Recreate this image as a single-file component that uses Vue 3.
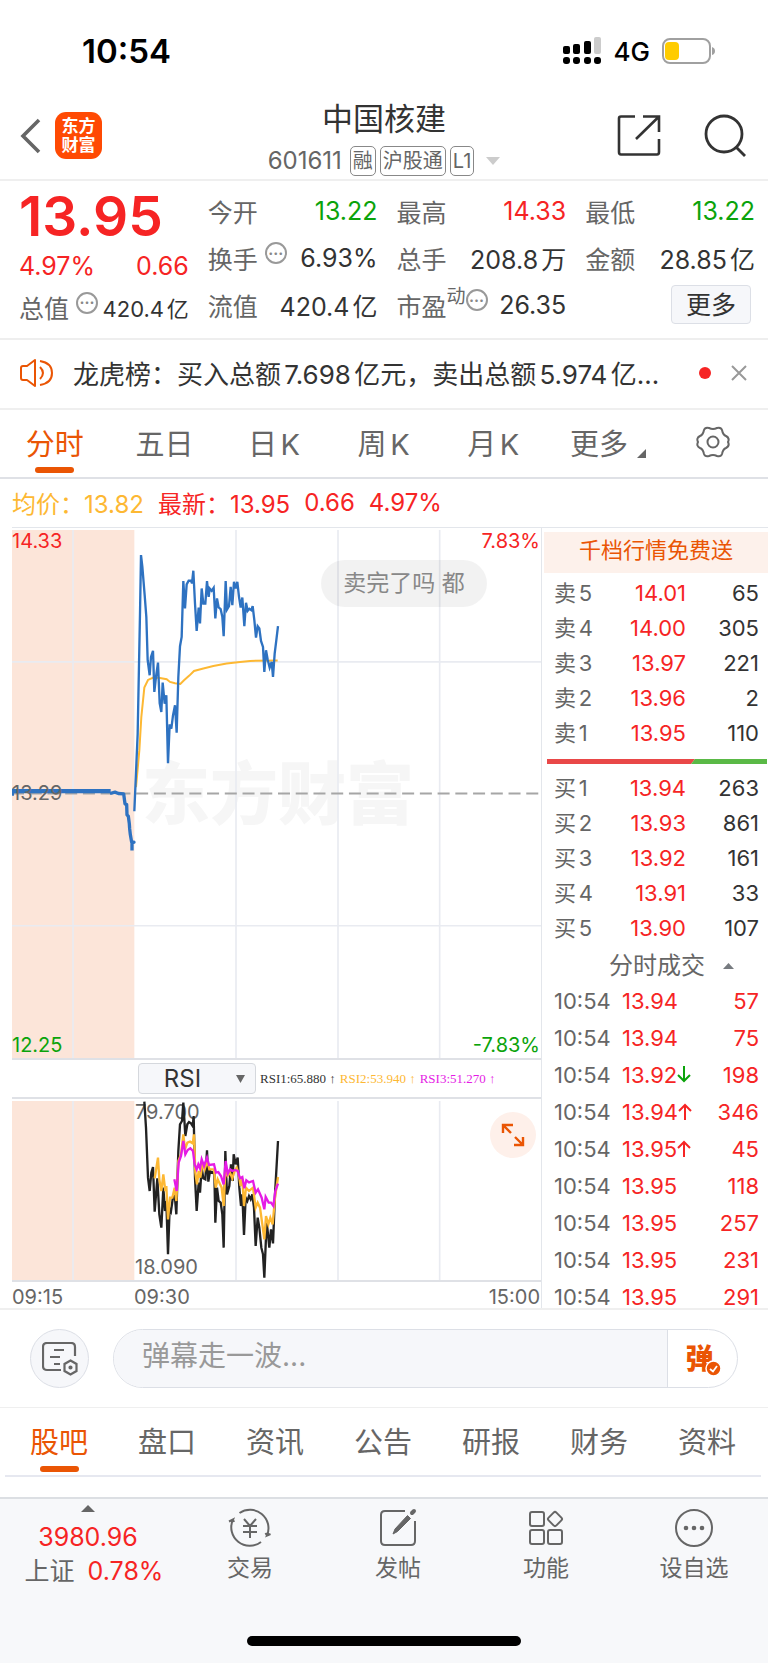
<script setup>
import { ref } from 'vue'

const period = ref('分时')
const periods = ['分时', '五日', '日K', '周K', '月K']
const section = ref('股吧')
const sections = ['股吧', '盘口', '资讯', '公告', '研报', '财务', '资料']
const indicator = ref('RSI')
const message = ref('')

const sells = [
  ['卖5', '14.01', 65], ['卖4', '14.00', 305], ['卖3', '13.97', 221], ['卖2', '13.96', 2], ['卖1', '13.95', 110],
]
const buys = [
  ['买1', '13.94', 263], ['买2', '13.93', 861], ['买3', '13.92', 161], ['买4', '13.91', 33], ['买5', '13.90', 107],
]
const trades = [
  ['13.94', '', 57], ['13.94', '', 75], ['13.92', 'down', 198], ['13.94', 'up', 346], ['13.95', 'up', 45],
  ['13.95', '', 118], ['13.95', '', 257], ['13.95', '', 231], ['13.95', '', 291],
]

const priceLine = '403,872 413,640 420,280 423,105 427,140 434,225 439,290 443,420 449,465 453,410 459,392 463,515 468,470 474,427 479,548 484,575 488,487 494,550 499,525 504,728 509,612 514,625 519,585 525,555 530,637 535,470 540,378 545,350 550,183 555,265 560,193 566,182 573,182 576,190 580,152 585,250 590,332 596,262 600,310 605,205 610,250 616,250 621,183 626,230 629,205 635,212 641,203 646,295 651,235 656,262 662,267 667,290 671,348 677,183 681,268 687,258 692,200 697,255 702,185 707,205 712,185 717,230 722,262 727,232 733,318 738,248 743,272 748,266 754,270 758,258 763,300 768,352 773,318 778,325 783,362 789,380 793,455 798,390 803,418 809,442 815,425 819,470 824,400 829,360 834,318'
const averageLine = '408,800 418,690 424,590 433,502 444,479 460,472 480,473 500,477 510,485 525,489 541,491 552,480 568,466 582,452 610,445 640,437 680,430 720,425 750,422 833,421'
const openingLine = '330,819 345,815 355,819 371,820 375,850 380,852 381,883 385,887 388,910 389,925 391,942 395,965 402,965 396,967 396,990'
const rsi1 = '73,32 78,110 84,260 89,300 94,245 99,228 104,362 112,262 118,370 124,410 130,290 135,360 139,330 144,490 149,350 153,360 158,325 164,310 169,370 175,180 180,100 186,90 190,35 196,135 202,100 207,93 213,97 218,105 221,75 225,260 230,360 236,275 240,305 245,230 250,262 256,265 261,178 265,272 270,240 277,245 283,240 286,395 291,290 296,330 302,335 307,370 311,470 316,180 321,310 328,285 333,220 338,270 341,190 347,220 353,200 358,290 363,345 367,310 372,432 377,320 382,330 387,315 392,325 397,310 402,350 407,465 413,380 418,410 424,470 429,490 433,560 440,390 448,470 453,415 459,457 465,310 474,150'
const rsi2 = '104,262 110,225 114,200 118,265 124,300 130,250 136,300 139,285 144,385 150,320 157,320 164,290 169,330 175,210 183,190 190,130 195,175 202,155 210,152 218,157 222,130 226,245 231,280 236,240 241,260 248,215 254,235 262,210 268,235 282,235 287,290 293,265 300,280 305,290 311,345 316,240 323,255 330,245 337,262 344,240 350,230 356,250 362,285 367,265 372,345 378,290 387,300 399,290 407,350 413,335 420,350 427,400 433,445 438,375 445,400 451,380 458,400 465,320 474,258'
const rsi3 = '163,265 170,300 176,215 183,195 190,150 196,190 203,177 211,172 219,180 224,220 230,235 235,220 240,232 245,205 252,225 261,200 267,222 282,220 288,245 295,243 303,255 311,280 317,210 323,248 330,235 337,240 345,237 353,240 360,262 367,258 373,292 379,268 387,274 399,270 407,305 414,295 425,320 433,355 437,318 446,335 453,335 460,345 466,300 474,278'
</script>

<template>
  <div class="page">
    <div class="status">
      <span class="clock">10:54</span>
      <div class="status-right">
        <svg class="signal" width="40" height="28" viewBox="0 0 40 28">
          <g>
            <rect x="1" y="9" width="7" height="8" rx="2" /><rect x="11" y="7" width="7" height="10" rx="2" />
            <rect x="22" y="4" width="7" height="13" rx="2" /><rect x="32" y="0" width="7" height="17" rx="2" fill="#ccc" />
            <rect x="1" y="20" width="7" height="7" rx="3" /><rect x="11" y="20" width="7" height="7" rx="3" />
            <rect x="22" y="20" width="7" height="7" rx="3" /><rect x="32" y="20" width="7" height="7" rx="3" />
          </g>
        </svg>
        <span class="network">4G</span>
        <svg width="54" height="26" viewBox="0 0 54 26">
          <rect x="1" y="1" width="47" height="24" rx="7" fill="none" stroke="#a0a0a0" stroke-width="2" />
          <rect x="3" y="4" width="14" height="18" rx="4" fill="#ffcc00" />
          <path d="M50 9 Q53 10 53 13 Q53 16 50 17Z" fill="#a0a0a0" />
        </svg>
      </div>
    </div>

    <header class="header">
      <div class="side">
        <button class="plain" aria-label="返回">
          <svg width="22" height="36" viewBox="0 0 22 36"><path d="M19 2 L3 18 L19 34" fill="none" stroke="#666" stroke-width="3.6" /></svg>
        </button>
        <a href="#" class="logo"><span>东方</span><span>财富</span></a>
      </div>
      <div class="title">
        <h1>中国核建</h1>
        <button class="plain code">
          <span class="digits">601611</span><span class="tag">融</span><span class="tag">沪股通</span><span class="tag">L1</span>
          <svg width="14" height="8" viewBox="0 0 14 8"><path d="M0 0H14L7 8Z" fill="#ccc" /></svg>
        </button>
      </div>
      <div class="side right">
        <button class="plain" aria-label="分享">
          <svg width="44" height="44" viewBox="0 0 44 44" fill="none" stroke="#333" stroke-width="2.6">
            <path d="M18 2.500H4Q2 2.500 2 4.500V38Q2 40.500 4 40.500H40Q42 40.500 42 38V25" /><path d="M26 2.500H42V18M42 2.500L19 25" />
          </svg>
        </button>
        <button class="plain" aria-label="搜索">
          <svg width="44" height="44" viewBox="0 0 44 44" fill="none" stroke="#333" stroke-width="2.800">
            <circle cx="21" cy="20" r="18" /><path d="M33 33L42 42" />
          </svg>
        </button>
      </div>
    </header>

    <section class="quote">
      <div class="lead">
        <strong class="last">13.95</strong>
        <div class="pair red"><span>4.97%</span><span>0.66</span></div>
        <div class="pair"><span class="name">总值<i class="info">···</i></span><span class="small">420.4亿</span></div>
      </div>
      <div class="col">
        <div class="pair"><span class="name">今开</span><span class="green">13.22</span></div>
        <div class="pair"><span class="name">换手<i class="info">···</i></span><span>6.93%</span></div>
        <div class="pair"><span class="name">流值</span><span>420.4亿</span></div>
      </div>
      <div class="col">
        <div class="pair"><span class="name">最高</span><span class="red">14.33</span></div>
        <div class="pair"><span class="name">总手</span><span>208.8万</span></div>
        <div class="pair"><span class="name tight">市盈<sup>动</sup><i class="info">···</i></span><span>26.35</span></div>
      </div>
      <div class="col">
        <div class="pair"><span class="name">最低</span><span class="green">13.22</span></div>
        <div class="pair"><span class="name">金额</span><span>28.85亿</span></div>
        <div class="pair end"><button class="more">更多</button></div>
      </div>
    </section>

    <section class="notice">
      <svg width="34" height="28" viewBox="0 0 34 28" fill="none" stroke="#ea5504" stroke-width="2">
        <path d="M15 1L7 7H3Q1 7 1 9V19Q1 21 3 21H7L15 27Z" stroke-linejoin="round" /><path d="M20 8Q26 14 20 20M20 2Q32 4 32 14Q32 24 20 26" />
      </svg>
      <p>龙虎榜：买入总额7.698亿元，卖出总额5.974亿…</p>
      <span class="dot"></span>
      <button class="plain" aria-label="关闭">
        <svg width="16" height="16" viewBox="0 0 16 16"><path d="M1 1L15 15M15 1L1 15" stroke="#999" stroke-width="2" /></svg>
      </button>
    </section>

    <nav class="periods">
      <button v-for="p in periods" :key="p" class="tab" :class="{ on: p === period }" @click="period = p">{{ p }}</button>
      <button class="tab wide">更多<svg width="9" height="9" viewBox="0 0 9 9"><path d="M9 0V9H0Z" fill="#666" /></svg></button>
      <button class="tab" aria-label="设置">
        <svg width="34" height="32" viewBox="0 0 34 32" fill="none" stroke="#666" stroke-width="2">
          <path d="M13 2Q17 4 21 2Q25 1 26 4Q27 9 30 10Q34 12 32 16Q34 20 30 22Q27 23 26 28Q25 31 21 30Q17 28 13 30Q9 31 8 28Q7 23 4 22Q0 20 2 16Q0 12 4 10Q7 9 8 4Q9 1 13 2Z" />
          <circle cx="17" cy="16" r="5.500" />
        </svg>
      </button>
    </nav>

    <div class="summary"><span class="gold">均价：13.82</span><span class="red">最新：13.95</span><span class="red">0.66</span><span class="red">4.97%</span></div>

    <main class="market">
      <div class="charts">
        <div class="chart">
          <span class="watermark">东方财富</span>
          <svg class="plot" viewBox="36 30 1587 1581" preserveAspectRatio="none" fill="none">
            <rect x="36" y="30" width="367" height="1581" fill="#fce5d9" />
            <path d="M219 30V1611M708 30V1611M1014 30V1611M1319 30V1611M36 425H1623M36 1215H1623" stroke="#e9ebf1" stroke-width="5" />
            <path d="M36 819H1623" stroke="#a6a6a6" stroke-width="6" stroke-dasharray="36 17.200" />
            <polyline :points="averageLine" stroke="#fdb833" stroke-width="6" />
            <path d="M38 804V826" stroke="#2e72c1" stroke-width="8" />
            <path d="M40 812H332" stroke="#2e72c1" stroke-width="13" />
            <polyline :points="openingLine" stroke="#2e72c1" stroke-width="10" stroke-linejoin="round" />
            <polyline :points="priceLine" stroke="#2e72c1" stroke-width="7" />
          </svg>
          <span class="mark top red">14.33</span>
          <span class="mark top far red">7.83%</span>
          <span class="mark mid">13.29</span>
          <span class="mark bottom green">12.25</span>
          <span class="mark bottom far green">-7.83%</span>
          <span class="bullet">卖完了吗 都</span>
        </div>
        <div class="rsi-bar">
          <label class="picker">
            <select v-model="indicator" aria-label="指标"><option>RSI</option></select>
            <svg width="9" height="8" viewBox="0 0 9 8"><path d="M0 0H9L4.500 8Z" fill="#666" /></svg>
          </label>
          <span>RSI1:65.880 ↑</span><span class="gold">RSI2:53.940 ↑</span><span class="pink">RSI3:51.270 ↑</span>
        </div>
        <div class="chart sub">
          <span class="mark top start">79.700</span>
          <svg class="plot" viewBox="-324 30 1587 537" preserveAspectRatio="none" fill="none">
            <rect x="-324" y="30" width="367" height="537" fill="#fce5d9" />
            <path d="M-141 30V567M348 30V567M654 30V567M959 30V567" stroke="#e9ebf1" stroke-width="5" />
            <polyline :points="rsi1" stroke="#222" stroke-width="7" />
            <polyline :points="rsi2" stroke="#fdb833" stroke-width="7" />
            <polyline :points="rsi3" stroke="#e51be5" stroke-width="7" />
          </svg>
          <span class="mark bottom start">18.090</span>
          <button class="expand" aria-label="放大">
            <svg width="24" height="24" viewBox="0 0 24 24" fill="none" stroke="#ea5504" stroke-width="2.400"><path d="M2 10V2H12M2 2L10 10M22 14V22H13M22 22L14 14" /></svg>
          </button>
        </div>
        <div class="times"><span>09:15</span><span class="open">09:30</span><span class="close">15:00</span></div>
      </div>

      <aside class="book">
        <a href="#" class="banner">千档行情免费送</a>
        <table class="depth">
          <tbody><tr v-for="r in sells" :key="r[0]"><th scope="row">{{ r[0] }}</th><td class="red">{{ r[1] }}</td><td>{{ r[2] }}</td></tr></tbody>
        </table>
        <svg class="ratio" viewBox="0 0 220 5" preserveAspectRatio="none"><path d="M0 0H148L144 5H0Z" fill="#e94848" /><path d="M148 0H220V5H144Z" fill="#5ab946" /></svg>
        <table class="depth">
          <tbody><tr v-for="r in buys" :key="r[0]"><th scope="row">{{ r[0] }}</th><td class="red">{{ r[1] }}</td><td>{{ r[2] }}</td></tr></tbody>
        </table>
        <button class="plain trades-title">分时成交<svg width="11" height="6" viewBox="0 0 11 6"><path d="M0 6H11L5.500 0Z" fill="#777b80" /></svg></button>
        <table class="trades">
          <tbody>
            <tr v-for="(t, i) in trades" :key="i">
              <th scope="row">10:54</th>
              <td>{{ t[0] }}<svg v-if="t[1]" :class="t[1]" width="14" height="17" viewBox="0 0 14 17" fill="none" stroke-width="2"><path d="M7 17V2M1 8L7 2L13 8" /></svg></td>
              <td>{{ t[2] }}</td>
            </tr>
          </tbody>
        </table>
      </aside>
    </main>

    <form class="comment" @submit.prevent>
      <button type="button" class="round" aria-label="弹幕设置">
        <svg width="36" height="34" viewBox="0 0 36 34" fill="none" stroke="#666" stroke-width="2.200">
          <path d="M19 28H5Q1 28 1 24V5Q1 1 5 1H29Q33 1 33 5V14M12 8H22M8 15H18M12 22H18" />
          <path d="M28.500 18.500L34.500 22V29L28.500 32.500L22.500 29V22Z" /><circle cx="28.500" cy="25.500" r="1" />
        </svg>
      </button>
      <div class="field">
        <input v-model="message" type="text" aria-label="弹幕" placeholder="弹幕走一波..." />
        <button type="button" class="danmu">弹
          <svg width="17" height="17" viewBox="0 0 17 17"><circle cx="8.500" cy="8.500" r="7.500" fill="#ea5504" stroke="#fff" stroke-width="1.500" /><path d="M5 9L8 11.500L12 6" fill="none" stroke="#fff" stroke-width="1.800" /></svg>
        </button>
      </div>
    </form>

    <nav class="sections">
      <button v-for="s in sections" :key="s" class="tab" :class="{ on: s === section }" @click="section = s">{{ s }}</button>
    </nav>

    <footer class="dock">
      <a href="#" class="index">
        <svg width="14" height="7" viewBox="0 0 14 7"><path d="M0 7H14L7 0Z" fill="#666" /></svg>
        <span class="red">3980.96</span>
        <span class="change"><span>上证</span><span class="red">0.78%</span></span>
      </a>
      <a href="#" class="item">
        <svg width="44" height="40" viewBox="0 0 44 40" fill="none" stroke="#666" stroke-width="2">
          <path d="M11.500 5A18.500 18.500 0 0 1 39 27.500L42.500 26M39 27.500L37.500 25" /><path d="M33 34A18.500 18.500 0 0 1 5 11.500L1 13.500M5 11.500L6 14" />
          <path d="M16 11L22 18L28 11M15 18H29M15 24H29M22 18V30" />
        </svg><span>交易</span>
      </a>
      <a href="#" class="item">
        <svg width="38" height="40" viewBox="0 0 38 40" fill="none" stroke="#666" stroke-width="2">
          <path d="M26 3H6Q2 3 2 7V33Q2 37 6 37H32Q36 37 36 33V13" /><path d="M33 5L35 3" stroke-width="4" stroke-linecap="round" /><path d="M28.500 7.500L31.500 10.500L18.500 23.500L14 26L16 21Z" fill="#666" stroke-width="1" />
        </svg><span>发帖</span>
      </a>
      <a href="#" class="item">
        <svg width="36" height="40" viewBox="0 0 36 40" fill="none" stroke="#666" stroke-width="2">
          <rect x="2" y="4" width="14" height="14" rx="2" /><rect x="2" y="22" width="14" height="14" rx="2" /><rect x="20" y="22" width="14" height="14" rx="2" /><rect x="21.500" y="5.500" width="11" height="11" rx="2" transform="rotate(45 27 11)" />
        </svg><span>功能</span>
      </a>
      <a href="#" class="item">
        <svg width="40" height="40" viewBox="0 0 40 40" fill="none" stroke="#666" stroke-width="2">
          <circle cx="20" cy="20" r="18" /><g fill="#666" stroke="none"><circle cx="12" cy="20" r="2.300" /><circle cx="20" cy="20" r="2.300" /><circle cx="28" cy="20" r="2.300" /></g>
        </svg><span>设自选</span>
      </a>
      <span class="home"></span>
    </footer>
  </div>
</template>

<style>
body { background: #fff; }
</style>

<style scoped>
* { box-sizing: border-box; }
.page { font-family: Inter, "Noto Sans CJK SC", sans-serif; color: #333; background: #fff; font-size: 24px; text-autospace: normal; }
button, input, select { font: inherit; color: inherit; }
button { border: 0; background: none; padding: 0; }
a { color: inherit; text-decoration: none; }
svg { display: block; }
.plain { display: flex; align-items: center; }
.red { color: #f62424; }
.green { color: #0ba30b; }
.gold { color: #fdb833; }
.pink { color: #e51be5; }

.status { display: flex; justify-content: space-between; align-items: center; height: 96px; padding: 6px 52px 0 82px; color: #000; }
.clock { font-size: 33px; font-weight: 600; }
.status-right { display: flex; align-items: center; gap: 12px; }
.network { font-size: 26px; font-weight: 500; }

.header { display: flex; justify-content: space-between; height: 85px; border-bottom: 2px solid #efefef; }
.side { display: flex; align-items: center; gap: 13px; width: 168px; padding: 0 0 4px 20px; }
.right { justify-content: flex-end; gap: 42px; padding: 0 21px 4px 0; }
.logo { display: flex; flex-direction: column; align-items: center; justify-content: center; width: 47px; height: 47px; border-radius: 11px; background: #ff4a03; color: #fff; font-size: 17px; font-weight: 700; line-height: 19px; }
.title { display: flex; flex-direction: column; align-items: center; gap: 8px; }
h1 { margin: 4px 0 0; font-size: 31px; font-weight: 400; line-height: 38px; }
.code { gap: 4px; line-height: 28px; color: #666; }
.digits { margin-right: 4px; }
.tag { border: 1px solid #888; border-radius: 5px; padding: 0 2px; font-size: 20px; }
.code svg { margin-left: 8px; }

.quote { display: grid; grid-template-columns: repeat(4, 1fr); gap: 19px; height: 159px; padding: 6px 13px 0 19px; border-bottom: 2px solid #eee; }
.lead { display: flex; flex-direction: column; }
.last { height: 56px; font-size: 55px; font-weight: 600; line-height: 58px; color: #f62424; }
.lead .pair.red { height: 46px; }
.lead .pair { height: 36px; }
.pair { display: flex; align-items: center; justify-content: space-between; height: 47px; font-size: 25px; white-space: nowrap; }
.end { justify-content: flex-end; }
.small { font-size: 22px; }
.name { display: flex; align-items: center; gap: 7px; color: #666; }
.tight { gap: 0; }
.info { display: flex; align-items: center; justify-content: center; width: 22px; height: 22px; margin-bottom: 9px; border: 2px solid #999; border-radius: 50%; font-size: 15px; font-style: normal; font-weight: 700; line-height: 15px; color: #888; }
sup { font-size: 19px; line-height: 19px; margin-bottom: 17px; }
.more { width: 80px; height: 39px; margin-right: 4px; border: 1px solid #dcdfe6; border-radius: 4px; background: #f6f7fa; line-height: 36px; }

.notice { display: flex; align-items: center; height: 70px; padding: 0 21px 2px 20px; border-bottom: 2px solid #efefef; font-size: 26px; }
.notice p { flex: 1; margin: 0 0 0 19px; padding-bottom: 2px; white-space: nowrap; }
.dot { width: 12px; height: 12px; margin-right: 20px; border-radius: 50%; background: #f62424; }

.periods { display: grid; grid-template-columns: repeat(5, 1fr) 120px 90px; height: 69px; padding-right: 10px; border-bottom: 2px solid #dfe1e6; }
.tab { position: relative; display: flex; align-items: center; justify-content: center; padding-bottom: 3px; font-size: 29px; color: #666; white-space: nowrap; }
.wide { gap: 9px; }
.wide svg { margin-top: 22px; }
.on { color: #ea5504; }
.on::after { content: ""; position: absolute; bottom: 4px; width: 39px; height: 6px; border-radius: 3px; background: #ea5504; }

.summary { display: flex; align-items: center; gap: 14px; height: 48px; padding: 0 12px 2px; }

.market { display: grid; grid-template-columns: minmax(0, 1fr) 226px; border-bottom: 2px solid #efefef; }
.charts { margin-left: 12px; border-top: 1px solid #e3e6eb; border-right: 1px solid #e3e6eb; }
.chart { position: relative; height: 532px; padding-top: 2px; border-bottom: 2px solid #dfe1e6; }
.plot { width: 100%; height: 100%; position: relative; }
.watermark { position: absolute; left: 130px; top: 216px; font-size: 68px; font-weight: 900; line-height: 100px; color: #f6f6f6; }
.mark { position: absolute; left: 0; font-size: 20px; line-height: 24px; color: #666; }
.mark.red { color: #f62424; }
.mark.green { color: #0ba30b; }
.top { top: 1px; }
.mid { top: 253px; }
.bottom { bottom: 1px; }
.mark.far { left: auto; right: 1px; }
.mark.start { left: 123px; }
.bullet { position: absolute; left: 309px; right: 54px; top: 32px; border-radius: 24px; background: rgba(0, 0, 0, 0.05); font-size: 23px; line-height: 47px; text-align: center; color: #888; }
.rsi-bar { display: flex; align-items: center; gap: 4px; height: 39px; padding-left: 126px; font: 13px "Liberation Serif", serif; border-bottom: 2px solid #dfe1e6; white-space: nowrap; }
.picker { position: relative; width: 118px; }
.picker select { width: 100%; height: 31px; padding: 0 29px 0 0; border: 1px solid #d5d8dd; border-radius: 4px; background: #f6f7fa; appearance: none; font: 24px Inter, sans-serif; text-align: center; text-align-last: center; }
.picker svg { position: absolute; right: 11px; top: 12px; }
.chart.sub { height: 183px; }
.expand { position: absolute; right: 5px; top: 13px; display: grid; place-items: center; width: 46px; height: 46px; border-radius: 50%; background: #fef0ea; }
.times { display: grid; grid-template-columns: 122px 1fr 1fr; height: 26px; font-size: 20px; line-height: 30px; color: #666; }
.close { text-align: right; padding-right: 1px; }

.book { border-top: 1px solid #e3e6eb; padding-left: 2px; font-size: 22px; }
.banner { display: block; height: 41px; margin: 4px 0 3px; background: #fdf1eb; color: #ea5504; line-height: 37px; text-align: center; }
table { width: 100%; border-collapse: collapse; table-layout: fixed; }
th, td { padding: 0; font-weight: 400; text-align: right; }
th { text-align: left; color: #666; padding-left: 10px; }
td:last-child { padding-right: 9px; }
.depth tr { height: 35px; }
.depth td, .depth th { line-height: 35px; }
.depth th { width: 60px; }
.depth td:nth-child(2) { width: 82px; }
.ratio { width: calc(100% - 4px); height: 5px; margin: 8px 0 7px 3px; }
.trades-title { gap: 18px; width: 100%; padding: 11px 0 0 65px; font-size: 24px; line-height: 18px; color: #666; }
.trades th, .trades td { padding-top: 15px; line-height: 22px; color: #f62424; }
.trades th { width: 78px; color: #666; }
.trades td:nth-child(2) { width: 76px; text-align: left; white-space: nowrap; }
.trades svg { display: inline-block; stroke: #f62424; }
.trades svg.down { stroke: #0ba30b; transform: rotate(180deg); }

.comment { display: flex; align-items: center; gap: 24px; height: 98px; padding: 0 30px; border-bottom: 1px solid #efefef; }
.round { display: grid; place-items: center; width: 59px; height: 59px; border: 1px solid #dcdfe6; border-radius: 50%; background: #f6f7fa; }
.field { flex: 1; display: flex; height: 59px; border: 1px solid #dcdfe6; border-radius: 30px; overflow: hidden; }
.field input { flex: 1; min-width: 0; border: 0; border-right: 1px solid #dcdfe6; padding: 0 28px 6px; background: #f6f7fa; font-size: 28px; }
.field input::placeholder { color: #999; }
.danmu { position: relative; width: 69px; padding: 0 6px 4px 0; font-size: 28px; font-weight: 900; color: #ea5504; }
.danmu svg { position: absolute; right: 15px; bottom: 10px; }

.sections { display: grid; grid-template-columns: repeat(7, 1fr); height: 69px; margin: 0 7px 20px 5px; border-bottom: 2px solid #e6e8f0; }
.sections .on::after { bottom: 3px; }

.dock { display: grid; grid-template-columns: 176px repeat(4, 1fr); height: 166px; padding-top: 6px; border-top: 2px solid #dcdfe3; background: #f7f8fa; color: #666; align-content: space-between; }
.index { display: flex; flex-direction: column; align-items: center; font-size: 25px; line-height: 34px; white-space: nowrap; }
.index > .red { margin-top: 8px; }
.change { display: flex; gap: 13px; padding-left: 12px; }
.item { display: flex; flex-direction: column; align-items: center; gap: 3px; padding-top: 3px; font-size: 23px; line-height: 34px; }
.home { grid-column: 1 / -1; justify-self: center; width: 274px; height: 10px; margin-bottom: 17px; border-radius: 5px; background: #000; }
</style>
